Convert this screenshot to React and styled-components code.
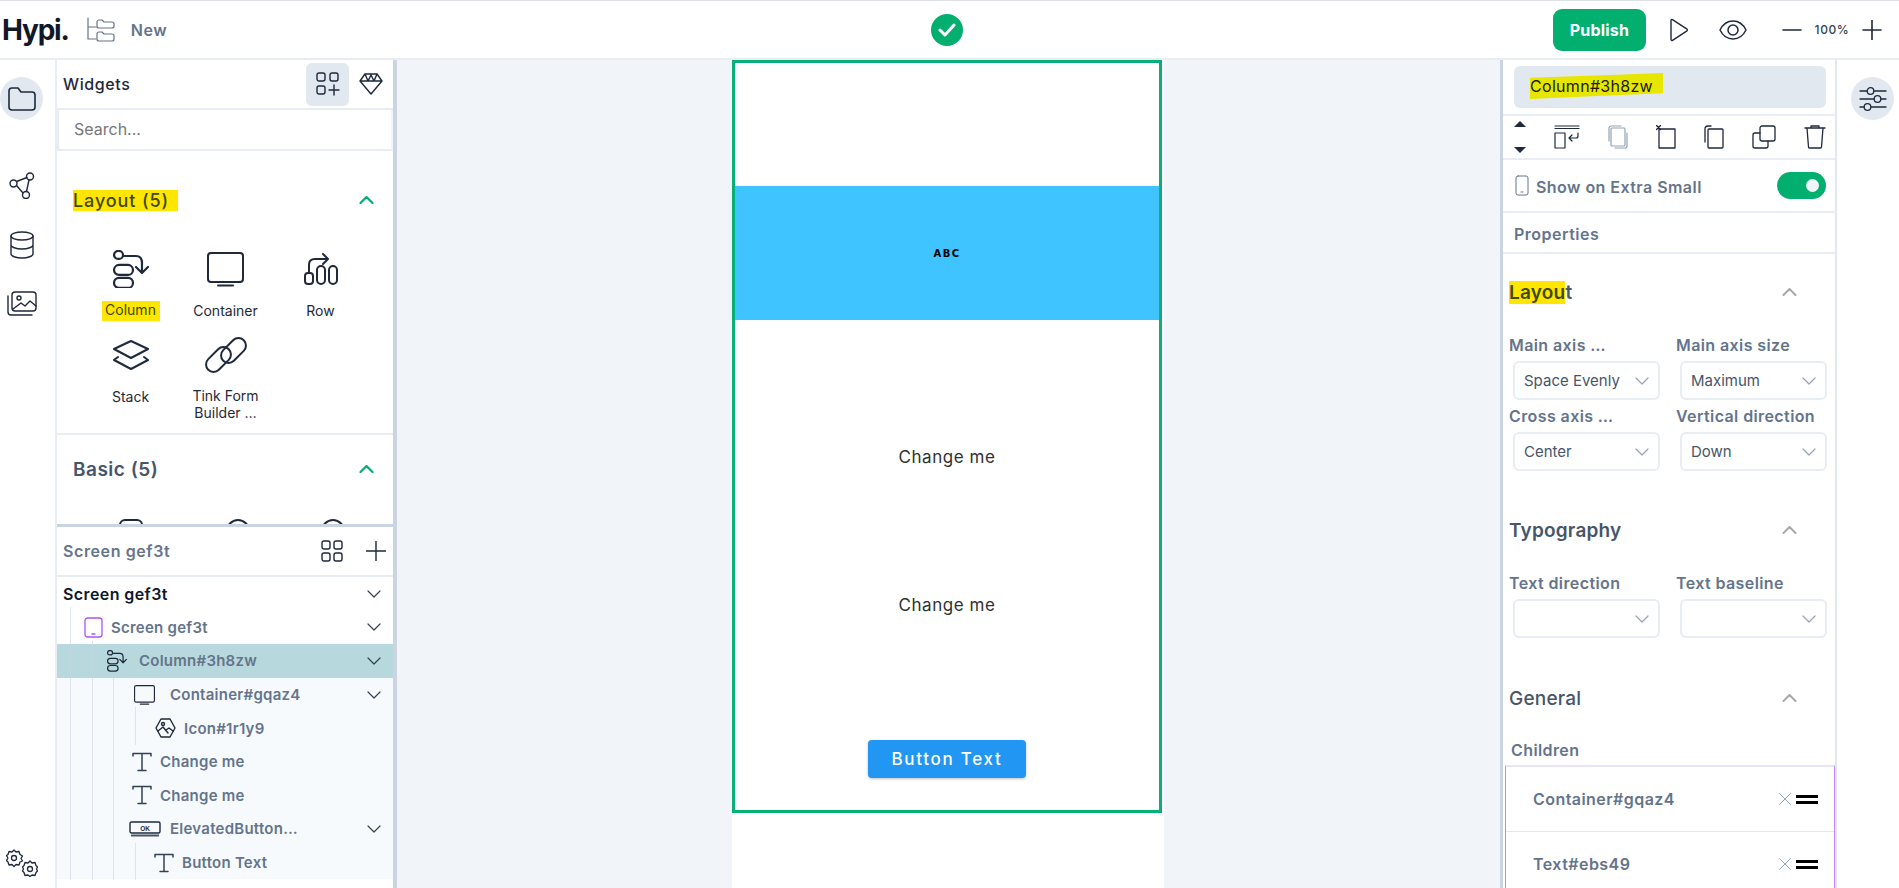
import React from 'react';
import styled, { createGlobalStyle } from 'styled-components';

const GlobalStyle = createGlobalStyle`
  html, body { margin: 0; padding: 0; height: 100%; background: #fff; }
  body { font-family: Inter, "Noto Sans", sans-serif; color: #1e293b; overflow: hidden; }
  * { box-sizing: border-box; }
`;

const Svg = ({ w = 24, h = 24, vb, sw = 1.6, color = '#1e293b', children }) => (
  <svg width={w} height={h} viewBox={vb || `0 0 ${w} ${h}`} fill="none" stroke={color} strokeWidth={sw} strokeLinecap="round" strokeLinejoin="round" style={{ flexShrink: 0, display: 'block' }}>
    {children}
  </svg>
);

const Chevron = ({ up, color = '#334155', w = 14, sw = 1.2 }) => (
  <Svg w={w} h={8} vb="0 0 14 8" sw={sw} color={color}>
    <path d={up ? 'M1 7l6-6 6 6' : 'M1 1l6 6 6-6'} />
  </Svg>
);

const ColumnIcon = ({ size = 36 }) => (
  <Svg w={size} h={size * 1.08} vb="0 0 36 39" sw={2.2}>
    <rect x="1" y="1" width="9" height="8" rx="4" />
    <path d="M10 6h13c4 0 6 3 6 7v9M23 17l6 6 6-6" />
    <rect x="1" y="15" width="19" height="10" rx="5" />
    <rect x="1" y="28" width="19" height="10" rx="5" />
  </Svg>
);
const ContainerIcon = ({ w = 37, h = 35 }) => (
  <Svg w={w} h={h} vb="0 0 37 35" sw={2}>
    <rect x="1" y="1" width="35" height="29" rx="3" />
    <path d="M11 33.500h15" />
  </Svg>
);
const RowIcon = () => (
  <Svg w={34} h={32} vb="0 0 34 32" sw={2}>
    <rect x="1" y="20" width="8" height="11" rx="3" />
    <rect x="13" y="13" width="8" height="18" rx="4" />
    <rect x="25" y="13" width="8" height="18" rx="4" />
    <path d="M5 20v-8c0-4 2-6 6-6h13M19 1l5 5-5 5" />
  </Svg>
);
const StackIcon = () => (
  <Svg w={38} h={30} vb="0 0 38 30" sw={2}>
    <path d="M19 1l17 8-17 9L2 9z" />
    <path d="M6 17l-4 3 17 9 17-9-4-3" />
  </Svg>
);
const LinkIcon = () => (
  <Svg w={46} h={36} vb="0 0 46 36" sw={2}>
    <rect x="1" y="15" width="29" height="15" rx="7.500" transform="rotate(-45 15.500 22.500)" />
    <rect x="16" y="6" width="29" height="15" rx="7.500" transform="rotate(-45 30.500 13.500)" />
  </Svg>
);
const TextIcon = () => (
  <Svg w={20} h={20} vb="0 0 20 20" sw={1.5} color="#334155">
    <path d="M1 4V1.500h18V4M10 1.500V18.500M6 18.500h8" />
  </Svg>
);
const PicIcon = () => (
  <Svg w={21} h={20} vb="0 0 21 20" sw={1.4}>
    <path d="M6 1h9l5 9-5 9H6l-5-9z" />
    <circle cx="8" cy="6" r="1.500" />
    <path d="M3 13l5-4 5 6M11 12l3-2 4 3" />
  </Svg>
);
const ElevatedIcon = () => (
  <svg width="32" height="16" viewBox="0 0 32 16" fill="none" style={{ flexShrink: 0, display: 'block' }}>
    <rect x="1" y="1" width="30" height="11" rx="1.500" stroke="#1e293b" strokeWidth="1.400" />
    <path d="M2 14.500h28" stroke="#475569" strokeWidth="2" />
    <text x="16" y="9.500" textAnchor="middle" fontFamily="Liberation Sans, sans-serif" fontWeight="700" fontSize="6.500" fill="#1e293b">OK</text>
  </svg>
);
const TabletIcon = () => (
  <Svg w={19} h={21} vb="0 0 19 21" sw={1.3} color="#a855f7">
    <rect x="1" y="1" width="17" height="19" rx="2.500" />
    <path d="M8 17h3" />
  </Svg>
);

const widgets = [
  { label: 'Column', icon: <ColumnIcon />, marked: true },
  { label: 'Container', icon: <ContainerIcon /> },
  { label: 'Row', icon: <RowIcon /> },
  { label: 'Stack', icon: <StackIcon /> },
  { label: 'Tink Form Builder …', icon: <LinkIcon /> },
];

const tree = [
  { id: 'a', text: 'Screen gef3t', pad: 6, strong: true, chevron: true },
  { id: 'b', text: 'Screen gef3t', pad: 27, gap: 8, icon: <TabletIcon />, chevron: true },
  { id: 'c', text: 'Column#3h8zw', pad: 50, gap: 12, icon: <ColumnIcon size={20} />, chevron: true, selected: true },
  { id: 'd', text: 'Container#gqaz4', pad: 77, gap: 15, icon: <ContainerIcon w={21} h={20} />, chevron: true, tinted: true },
  { id: 'e', text: 'Icon#1r1y9', pad: 98, gap: 8, icon: <PicIcon />, tinted: true },
  { id: 'f', text: 'Change me', pad: 75, gap: 8, icon: <TextIcon />, tinted: true },
  { id: 'g', text: 'Change me', pad: 75, gap: 8, icon: <TextIcon />, tinted: true },
  { id: 'h', text: 'ElevatedButton…', pad: 72, gap: 9, icon: <ElevatedIcon />, chevron: true, tinted: true },
  { id: 'i', text: 'Button Text', pad: 97, gap: 8, icon: <TextIcon />, tinted: true },
];

const guides = [
  { left: 13, top: 30, height: 273 },
  { left: 35, top: 64, height: 239 },
  { left: 56, top: 100, height: 203 },
  { left: 78, top: 130, height: 38 },
  { left: 78, top: 266, height: 37 },
];

const Select = ({ value }) => (
  <SelectBox>
    <span>{value}</span>
    <Chevron color="#94a3b8" />
  </SelectBox>
);

const Field = ({ label, value }) => (
  <div>
    <FieldLabel>{label}</FieldLabel>
    <Select value={value} />
  </div>
);

const App = () => (
  <Page>
    <GlobalStyle />
    <TopBar>
      <TopLeft>
        <Logo>Hypi.</Logo>
        <Svg w={28} h={25} vb="0 0 28 25" sw={1.2} color="#64748b">
          <path d="M1 1v21h8M1 10h8" />
          <path d="M10 5a2 2 0 012-2h3l2 2h8a2 2 0 012 2v2a2 2 0 01-2 2H12a2 2 0 01-2-2zM10 17a2 2 0 012-2h3l2 2h8a2 2 0 012 2v3a2 2 0 01-2 2H12a2 2 0 01-2-2z" />
        </Svg>
        <ProjectName>New</ProjectName>
      </TopLeft>
      <StatusDot>
        <Svg w={18} h={16} vb="0 0 18 16" sw={3} color="#fff">
          <path d="M2 8l5 5 9-10" />
        </Svg>
      </StatusDot>
      <TopRight>
        <PublishButton>Publish</PublishButton>
        <Svg w={20} h={24} vb="0 0 20 24" sw={1.4}>
          <path d="M2 2.500v19a1 1 0 001.500.8L18 12.800a1 1 0 000-1.600L3.500 1.700A1 1 0 002 2.500z" />
        </Svg>
        <Svg w={28} h={22} vb="0 0 28 22" sw={1.5}>
          <path d="M1 11c3-6 8-9 13-9s10 3 13 9c-3 6-8 9-13 9S4 17 1 11z" />
          <circle cx="14" cy="11" r="5" />
        </Svg>
        <ZoomGroup>
          <Svg w={20} h={4} vb="0 0 20 4" sw={1.6}><path d="M1 2h18" /></Svg>
          <ZoomValue>100%</ZoomValue>
          <Svg w={20} h={20} vb="0 0 20 20" sw={1.6}><path d="M1 10h18M10 0v20" /></Svg>
        </ZoomGroup>
      </TopRight>
    </TopBar>

    <Body>
      <LeftRail>
        <RailActive>
          <Svg w={28} h={24} vb="0 0 28 24" sw={1.6}>
            <path d="M1 4a3 3 0 013-3h6l3 4h11a3 3 0 013 3v12a3 3 0 01-3 3H4a3 3 0 01-3-3z" />
          </Svg>
        </RailActive>
        <RailIcon $top={52}>
          <Svg w={26} h={27} vb="0 0 26 27" sw={1.4}>
            <circle cx="4.500" cy="11.500" r="3.500" /><circle cx="21" cy="4.500" r="3.500" /><circle cx="17" cy="23" r="3.500" />
            <path d="M7.500 9.500L18 5.500M7.500 13.500l6.500 7.500M20 8l-2.500 11.500" />
          </Svg>
        </RailIcon>
        <RailIcon $top={32}>
          <Svg w={24} h={28} vb="0 0 24 28" sw={1.4}>
            <ellipse cx="12" cy="5" rx="11" ry="4" />
            <path d="M1 5v18c0 2 5 4 11 4s11-2 11-4V5M1 14c0 2 5 4 11 4s11-2 11-4" />
          </Svg>
        </RailIcon>
        <RailIcon $top={32}>
          <Svg w={30} h={26} vb="0 0 30 26" sw={1.4}>
            <rect x="5" y="1" width="24" height="19" rx="3" />
            <path d="M1 5v16a3 3 0 003 3h21" />
            <circle cx="12" cy="7" r="2" />
            <path d="M6 18l8-6 4 3 5-5 6 5" />
          </Svg>
        </RailIcon>
        <RailFoot>
          <Svg w={32} h={28} vb="0 0 32 28" sw={1.3}>
            <circle cx="8" cy="9" r="2.500" />
            <path d="M8 1l2 2 3-.5 1 3 2.500 1.500-1.500 2.500 1.500 2.500L14 13l-1 3-3-.5-2 2-2-2-3 .5-1-3L.500 11.500 2 9 .500 6.500 2 5.500l1-3 3 .5z" />
            <circle cx="24" cy="20" r="2.500" />
            <path d="M24 12l2 2 3-.5 1 3 1.500 1.500-1 2 1 2-1.500 1.500-1 3-3-.5-2 1.500-2-1.500-3 .5-1-3-1.500-1.500 1-2-1-2 1.500-1.500 1-3 3 .5z" />
          </Svg>
        </RailFoot>
      </LeftRail>

      <LeftPanel>
        <WidgetsPane>
          <PaneHeader>
            <PaneTitle>Widgets</PaneTitle>
            <HeaderActive>
              <Svg w={24} h={24} vb="0 0 24 24" sw={1.4}>
                <rect x="1" y="1" width="8" height="8" rx="2" /><rect x="14" y="1" width="8" height="8" rx="2" /><rect x="1" y="14" width="8" height="8" rx="2" />
                <path d="M18 13v10M13 18h10" />
              </Svg>
            </HeaderActive>
            <GemSlot>
              <Svg w={24} h={22} vb="0 0 24 22" sw={1.4}>
                <path d="M6 1h12l5 7-11 13L1 8zM1 8h22M6 1l3 7 3-6 3 6 3-7" />
              </Svg>
            </GemSlot>
          </PaneHeader>
          <SearchBox>Search...</SearchBox>
          <WidgetSection>
            <GroupHead>
              <GroupTitle $marked>Layout (5)</GroupTitle>
              <Chevron up color="#02af6f" w={15} sw={2.2} />
            </GroupHead>
            <WidgetGrid>
              {widgets.map((item) => (
                <WidgetItem key={item.label}>
                  <WidgetIconBox>{item.icon}</WidgetIconBox>
                  <WidgetLabel $marked={item.marked}>{item.label}</WidgetLabel>
                </WidgetItem>
              ))}
            </WidgetGrid>
          </WidgetSection>
          <BasicHead>
            <BasicTitle>Basic (5)</BasicTitle>
            <Chevron up color="#02af6f" w={15} sw={2.2} />
          </BasicHead>
          <PeekGrid>
            <WidgetItem><Svg w={24} h={24} sw={2}><rect x="1" y="1" width="22" height="22" rx="5" /></Svg></WidgetItem>
            <WidgetItem><Svg w={24} h={24} sw={2}><circle cx="12" cy="12" r="11" /></Svg></WidgetItem>
            <WidgetItem><Svg w={24} h={24} sw={2}><circle cx="12" cy="12" r="11" /></Svg></WidgetItem>
          </PeekGrid>
        </WidgetsPane>

        <TreePane>
          <TreeHeader>
            <TreeTitle>Screen gef3t</TreeTitle>
            <Svg w={22} h={22} vb="0 0 22 22" sw={1.4}>
              <rect x="1" y="1" width="8" height="8" rx="2" /><rect x="13" y="1" width="8" height="8" rx="2" /><rect x="1" y="13" width="8" height="8" rx="2" /><rect x="13" y="13" width="8" height="8" rx="2" />
            </Svg>
            <Svg w={20} h={20} vb="0 0 20 20" sw={1.4}><path d="M0 10h20M10 0v20" /></Svg>
          </TreeHeader>
          <TreeBody>
            {guides.map((g) => (
              <Guide key={`${g.left}-${g.top}`} $left={g.left} $top={g.top} $height={g.height} />
            ))}
            {tree.map((row) => (
              <TreeRow key={row.id} $pad={row.pad} $gap={row.gap} $selected={row.selected} $tinted={row.tinted}>
                {row.icon}
                <TreeText $strong={row.strong}>{row.text}</TreeText>
                {row.chevron && <TreeChevron><Chevron /></TreeChevron>}
              </TreeRow>
            ))}
          </TreeBody>
        </TreePane>
      </LeftPanel>

      <Canvas>
        <Phone>
          <Frame>
            <BlueBox><AbcText>ABC</AbcText></BlueBox>
            <CanvasText>Change me</CanvasText>
            <CanvasText>Change me</CanvasText>
            <CanvasButton>Button Text</CanvasButton>
          </Frame>
        </Phone>
      </Canvas>

      <RightPanel>
        <NameRow>
          <NameInput><NameMark>Column#3h8zw</NameMark></NameInput>
        </NameRow>
        <ToolRow>
          <Arrows><ArrowUp /><ArrowDown /></Arrows>
          <Svg w={26} h={24} vb="0 0 26 24" sw={1.2}>
            <path d="M1 1h24M1 3.500h24" /><rect x="1" y="8" width="10" height="15" /><path d="M24 8v3a2 2 0 01-2 2h-7M18 10l-3 3 3 3" />
          </Svg>
          <Svg w={20} h={24} vb="0 0 20 24" sw={1.2} color="#94a3b8">
            <rect x="3" y="3" width="14" height="18" rx="1" /><path d="M1 16V3a2 2 0 012-2h10M19 8v13a2 2 0 01-2 2H7" />
          </Svg>
          <Svg w={20} h={24} vb="0 0 20 24" sw={1.3}>
            <rect x="3" y="4" width="16" height="19" /><path d="M0.500 0.500l4 4M4.500 0.500l-4 4" />
          </Svg>
          <Svg w={20} h={24} vb="0 0 20 24" sw={1.3}>
            <rect x="4" y="4" width="15" height="19" rx="1" /><path d="M1 17V4a3 3 0 013-3h3" />
          </Svg>
          <Svg w={24} h={24} vb="0 0 24 24" sw={1.3}>
            <rect x="8" y="1" width="15" height="15" rx="2" /><path d="M8 8H3a2 2 0 00-2 2v11a2 2 0 002 2h11a2 2 0 002-2v-5" />
          </Svg>
          <Svg w={22} h={24} vb="0 0 22 24" sw={1.3}>
            <path d="M1 3h20M7 3V1h8v2M3 3l1.500 19a1 1 0 001 1h11a1 1 0 001-1L19 3" />
          </Svg>
        </ToolRow>
        <ShowRow>
          <Svg w={14} h={21} vb="0 0 14 21" sw={1} color="#64748b">
            <rect x="1" y="1" width="12" height="19" rx="2" /><path d="M6 17h2" />
          </Svg>
          <ShowLabel>Show on Extra Small</ShowLabel>
          <Toggle><ToggleKnob /></Toggle>
        </ShowRow>
        <PropsRow>Properties</PropsRow>

        <SectionHead>
          <SectionTitle><LayoutMark>Layou</LayoutMark>t</SectionTitle>
          <Chevron up color="#a8a8a8" w={15} sw={2} />
        </SectionHead>
        <FieldGrid>
          <Field label="Main axis …" value="Space Evenly" />
          <Field label="Main axis size" value="Maximum" />
          <Field label="Cross axis …" value="Center" />
          <Field label="Vertical direction" value="Down" />
        </FieldGrid>

        <SectionHead $top={39}>
          <SectionTitle>Typography</SectionTitle>
          <Chevron up color="#a8a8a8" w={15} sw={2} />
        </SectionHead>
        <FieldGrid>
          <Field label="Text direction" value="" />
          <Field label="Text baseline" value="" />
        </FieldGrid>

        <SectionHead $top={40}>
          <SectionTitle $light>General</SectionTitle>
          <Chevron up color="#a8a8a8" w={15} sw={2} />
        </SectionHead>
        <ChildrenLabel>Children</ChildrenLabel>
        <ChildList>
          {['Container#gqaz4', 'Text#ebs49'].map((name) => (
            <ChildRow key={name}>
              <span>{name}</span>
              <Svg w={12} h={12} vb="0 0 12 12" sw={1} color="#94a3b8"><path d="M0.500 0.500l11 11M11.500 0.500l-11 11" /></Svg>
              <DragBars />
            </ChildRow>
          ))}
        </ChildList>
      </RightPanel>

      <RightRail>
        <RailActive>
          <Svg w={28} h={24} vb="0 0 28 24" sw={1.3}>
            <path d="M1 4h7M15 4h12M1 12h14M22 12h5M1 20h4M12 20h15" />
            <circle cx="11.500" cy="4" r="3.300" /><circle cx="18.500" cy="12" r="3.300" /><circle cx="8.500" cy="20" r="3.300" />
          </Svg>
        </RailActive>
      </RightRail>
    </Body>
  </Page>
);

const Page = styled.div`
  width: 100%;
  height: 100vh;
  display: flex;
  flex-direction: column;
  overflow: hidden;
`;

const TopBar = styled.header`
  height: 60px;
  flex-shrink: 0;
  display: grid;
  grid-template-columns: 1fr auto 1fr;
  align-items: center;
  padding-right: 5px;
  border-top: 1px solid #dcdfe3;
  border-bottom: 2px solid #e8edf3;
`;

const TopLeft = styled.div`
  display: flex;
  align-items: center;
`;

const Logo = styled.div`
  font-size: 28px;
  font-weight: 700;
  letter-spacing: -1.2px;
  color: #111827;
  margin: 0 18px 0 2px;
`;

const ProjectName = styled.div`
  font-size: 16px;
  font-weight: 600;
  letter-spacing: 0.6px;
  color: #64748b;
  margin-left: 16px;
`;

const StatusDot = styled.div`
  width: 32px;
  height: 32px;
  border-radius: 50%;
  background: #02af6f;
  display: flex;
  align-items: center;
  justify-content: center;
`;

const TopRight = styled.div`
  display: flex;
  align-items: center;
  justify-content: flex-end;
  margin-right: 12px;
`;

const PublishButton = styled.div`
  width: 93px;
  height: 42px;
  border-radius: 9px;
  background: #02af6f;
  color: #fff;
  font-size: 16px;
  font-weight: 700;
  letter-spacing: 0.2px;
  display: flex;
  align-items: center;
  justify-content: center;
  margin-right: 23px;
  + svg { margin-right: 30px; }
`;

const ZoomGroup = styled.div`
  display: flex;
  align-items: center;
  margin-left: 35px;
`;

const ZoomValue = styled.div`
  font-size: 12px;
  font-weight: 500;
  letter-spacing: 0.6px;
  width: 60px;
  text-align: center;
  color: #334155;
`;

const Body = styled.div`
  flex: 1;
  min-height: 0;
  display: flex;
`;

const LeftRail = styled.nav`
  width: 57px;
  flex-shrink: 0;
  display: flex;
  flex-direction: column;
  padding: 17px 0 11px;
  border-right: 2px solid #e8edf3;
`;

const RailActive = styled.div`
  width: 43px;
  height: 43px;
  border-radius: 50%;
  background: #e2e8f0;
  display: flex;
  align-items: center;
  justify-content: center;
`;

const RailIcon = styled.div`
  display: flex;
  justify-content: center;
  width: 43px;
  margin-top: ${(props) => props.$top}px;
`;

const RailFoot = styled.div`
  margin: auto 0 0 6px;
`;

const LeftPanel = styled.aside`
  width: 340px;
  flex-shrink: 0;
  display: flex;
  flex-direction: column;
  border-right: 4px solid #cbd5e1;
`;

const WidgetsPane = styled.div`
  height: 467px;
  flex-shrink: 0;
  overflow: hidden;
  border-bottom: 3px solid #cbd5e1;
`;

const PaneHeader = styled.div`
  height: 50px;
  display: flex;
  align-items: center;
  padding: 0 0 0 6px;
  border-bottom: 2px solid #e8edf3;
`;

const PaneTitle = styled.div`
  flex: 1;
  font-size: 16px;
  font-weight: 500;
  letter-spacing: 0.6px;
  color: #1e293b;
`;

const HeaderActive = styled.div`
  width: 43px;
  height: 43px;
  border-radius: 6px;
  background: #e2e8f0;
  display: flex;
  align-items: center;
  justify-content: center;
`;

const GemSlot = styled.div`
  width: 43px;
  display: flex;
  justify-content: center;
  margin-right: 1px;
`;

const SearchBox = styled.div`
  height: 41px;
  display: flex;
  align-items: center;
  padding: 0 0 2px 15px;
  font-size: 16px;
  color: #767676;
  border: 2px solid #e8edf3;
  border-top: 0;
  border-right-color: #f1f5f9;
`;

const WidgetSection = styled.div`
  height: 284px;
  padding-top: 37px;
  border-bottom: 2px solid #e8edf3;
`;

const GroupHead = styled.div`
  display: flex;
  align-items: center;
  justify-content: space-between;
  height: 24px;
  padding: 0 19px 0 16px;
`;

const GroupTitle = styled.div`
  font-size: 18px;
  font-weight: 500;
  letter-spacing: 0.9px;
  color: ${(props) => (props.$marked ? '#3f4a00' : '#475569')};
  background: ${(props) => (props.$marked ? '#ffe600' : 'transparent')};
  padding: 0 9px 0 0;
`;

const WidgetGrid = styled.div`
  display: grid;
  grid-template-columns: repeat(3, 95px);
  grid-auto-rows: 86px;
  padding-left: 26px;
  margin-top: 37px;
`;

const WidgetItem = styled.div`
  display: flex;
  flex-direction: column;
  align-items: center;
`;

const WidgetIconBox = styled.div`
  height: 40px;
  display: flex;
  align-items: center;
  justify-content: center;
  margin-bottom: 13px;
`;

const WidgetLabel = styled.div`
  font-size: 14px;
  line-height: 17px;
  color: #1f2937;
  text-align: center;
  width: 72px;
  ${(props) => props.$marked && 'background: #ffe600; color: #3f4a00; width: 58px; padding-bottom: 3px; margin-top: -1px;'}
`;

const BasicHead = styled(GroupHead)`
  margin-top: 22px;
`;

const BasicTitle = styled.div`
  font-size: 19px;
  font-weight: 600;
  letter-spacing: 0.5px;
  color: #475569;
`;

const PeekGrid = styled(WidgetGrid)`
  grid-template-columns: 95px 120px 70px;
  margin-top: 38px;
`;

const TreePane = styled.div`
  flex: 1;
  min-height: 0;
`;

const TreeHeader = styled.div`
  height: 50px;
  display: flex;
  align-items: center;
  padding: 0 7px 0 6px;
  border-bottom: 2px solid #e8edf3;
  gap: 23px;
`;

const TreeTitle = styled.div`
  flex: 1;
  font-size: 16px;
  font-weight: 600;
  letter-spacing: 0.6px;
  color: #64748b;
`;

const TreeBody = styled.div`
  position: relative;
`;

const Guide = styled.div`
  position: absolute;
  left: ${(props) => props.$left}px;
  top: ${(props) => props.$top}px;
  width: 1px;
  height: ${(props) => props.$height}px;
  background: #cbd5e1;
  opacity: 0.6;
`;

const TreeRow = styled.div`
  height: 33.600px;
  display: flex;
  align-items: center;
  padding: 0 12px 0 ${(props) => props.$pad}px;
  gap: ${(props) => props.$gap || 0}px;
  background: ${(props) => (props.$selected ? '#b7d8dc' : props.$tinted ? '#f7fafc' : 'transparent')};
`;

const TreeText = styled.div`
  flex: 1;
  font-size: 15px;
  font-weight: 600;
  letter-spacing: 0.25px;
  white-space: nowrap;
  color: ${(props) => (props.$strong ? '#0f172a' : '#64748b')};
  ${(props) => props.$strong && 'font-size: 16px; letter-spacing: 0.4px;'}
`;

const TreeChevron = styled.div`
  flex-shrink: 0;
`;

const Canvas = styled.main`
  flex: 1;
  min-width: 0;
  background: #f1f5f9;
  display: flex;
  justify-content: center;
  padding-right: 1px;
`;

const Phone = styled.div`
  width: 432px;
  background: #fff;
`;

const Frame = styled.div`
  width: 430px;
  height: 753px;
  border: 3px solid #08b077;
  display: flex;
  flex-direction: column;
  align-items: center;
  gap: 128px;
  padding-top: 123px;
`;

const BlueBox = styled.div`
  width: 100%;
  height: 134px;
  background: #40c4ff;
  display: flex;
  align-items: center;
  justify-content: center;
  margin-bottom: -1px;
`;

const AbcText = styled.span`
  font-family: "DejaVu Sans", sans-serif;
  font-size: 10px;
  font-weight: 700;
  letter-spacing: 1.4px;
  color: #000;
`;

const CanvasText = styled.div`
  font-size: 17px;
  line-height: 20px;
  letter-spacing: 0.55px;
  color: #303030;
`;

const CanvasButton = styled.div`
  width: 158px;
  height: 38px;
  border-radius: 4px;
  background: #2196f3;
  color: #fff;
  font-size: 17px;
  font-weight: 500;
  letter-spacing: 1.7px;
  display: flex;
  align-items: center;
  justify-content: center;
  box-shadow: 0 1px 3px rgba(0, 0, 0, 0.25);
  margin-top: -3px;
`;

const RightPanel = styled.aside`
  width: 337px;
  flex-shrink: 0;
  overflow: hidden;
  border-left: 3px solid #cbd5e1;
  border-right: 2px solid #e2e8f0;
`;

const NameRow = styled.div`
  height: 56px;
  padding: 6px 9px 0 11px;
  border-bottom: 2px solid #e8edf3;
`;

const NameInput = styled.div`
  height: 42px;
  border-radius: 6px;
  background: #e2e8f0;
  display: flex;
  align-items: center;
  padding: 0 0 2px 16px;
  font-size: 16px;
  letter-spacing: 0.3px;
`;

const NameMark = styled.span`
  position: relative;
  isolation: isolate;
  color: #1a1a00;
  padding-right: 10px;
  &::before {
    content: '';
    position: absolute;
    inset: -3px 0 -3px 0;
    background: #e6e600;
    clip-path: polygon(0 18%, 60% 8%, 100% 0, 100% 78%, 50% 88%, 0 100%);
    z-index: -1;
  }
`;

const ToolRow = styled.div`
  height: 44px;
  display: flex;
  align-items: center;
  justify-content: space-between;
  padding: 0 9px 0 11px;
  border-bottom: 2px solid #e8edf3;
`;

const Arrows = styled.div`
  display: flex;
  flex-direction: column;
  gap: 20px;
`;

const ArrowUp = styled.div`
  width: 0;
  height: 0;
  border-left: 6px solid transparent;
  border-right: 6px solid transparent;
  border-bottom: 6px solid #1e293b;
`;

const ArrowDown = styled(ArrowUp)`
  border-bottom: 0;
  border-top: 6px solid #1e293b;
`;

const ShowRow = styled.div`
  height: 53px;
  display: flex;
  align-items: center;
  padding: 0 9px 0 12px;
  border-bottom: 2px solid #e8edf3;
`;

const ShowLabel = styled.div`
  flex: 1;
  font-size: 16px;
  font-weight: 600;
  letter-spacing: 0.45px;
  color: #64748b;
  margin: 2px 0 0 7px;
`;

const Toggle = styled.div`
  width: 49px;
  height: 27px;
  border-radius: 14px;
  background: #02af6f;
  display: flex;
  align-items: center;
  justify-content: flex-end;
  padding-right: 7px;
`;

const ToggleKnob = styled.div`
  width: 13px;
  height: 13px;
  border-radius: 50%;
  background: #f1f5f9;
`;

const PropsRow = styled.div`
  height: 41px;
  display: flex;
  align-items: center;
  padding: 2px 0 0 11px;
  font-size: 16px;
  font-weight: 600;
  letter-spacing: 0.5px;
  color: #64748b;
  border-bottom: 2px solid #e8edf3;
`;

const SectionHead = styled.div`
  height: 40px;
  display: flex;
  align-items: center;
  justify-content: space-between;
  padding: 0 38px 0 6px;
  margin-top: ${(props) => props.$top || 18}px;
  margin-bottom: 23px;
`;

const SectionTitle = styled.div`
  font-size: 19px;
  font-weight: ${(props) => (props.$light ? 500 : 600)};
  letter-spacing: 0.2px;
  color: #475569;
`;

const LayoutMark = styled.span`
  background: #ffe600;
  color: #3f4a00;
`;

const FieldGrid = styled.div`
  display: grid;
  grid-template-columns: 167px 159px;
  row-gap: 6px;
  padding-left: 6px;
`;

const FieldLabel = styled.div`
  height: 20px;
  font-size: 16px;
  line-height: 20px;
  font-weight: 600;
  letter-spacing: 0.4px;
  color: #64748b;
  white-space: nowrap;
  margin-bottom: 6px;
`;

const SelectBox = styled.div`
  width: 147px;
  height: 39px;
  margin-left: 4px;
  border: 2px solid #e8edf3;
  border-radius: 6px;
  display: flex;
  align-items: center;
  justify-content: space-between;
  padding: 0 9px 0 9px;
  font-size: 15px;
  color: #475569;
`;

const ChildrenLabel = styled.div`
  font-size: 16px;
  font-weight: 600;
  letter-spacing: 0.4px;
  line-height: 20px;
  color: #64748b;
  padding-left: 8px;
  margin-top: -1px;
`;

const ChildList = styled.div`
  margin: 5px 0 0 2px;
  width: 330px;
  border-top: 2px solid #e8e4f8;
  border-left: 1px solid #c084fc;
  border-right: 1px solid #c084fc;
`;

const ChildRow = styled.div`
  height: 65px;
  display: flex;
  align-items: center;
  padding: 0 16px 0 27px;
  border-bottom: 1px solid #e2e8f0;
  font-size: 16px;
  font-weight: 600;
  letter-spacing: 0.45px;
  color: #64748b;
  span { flex: 1; }
`;

const DragBars = styled.div`
  width: 22px;
  height: 9px;
  margin-left: 5px;
  border-top: 3px solid #000;
  border-bottom: 3px solid #000;
`;

const RightRail = styled.aside`
  width: 62px;
  flex-shrink: 0;
  padding: 17px 0 0 14px;
`;

export default App;
